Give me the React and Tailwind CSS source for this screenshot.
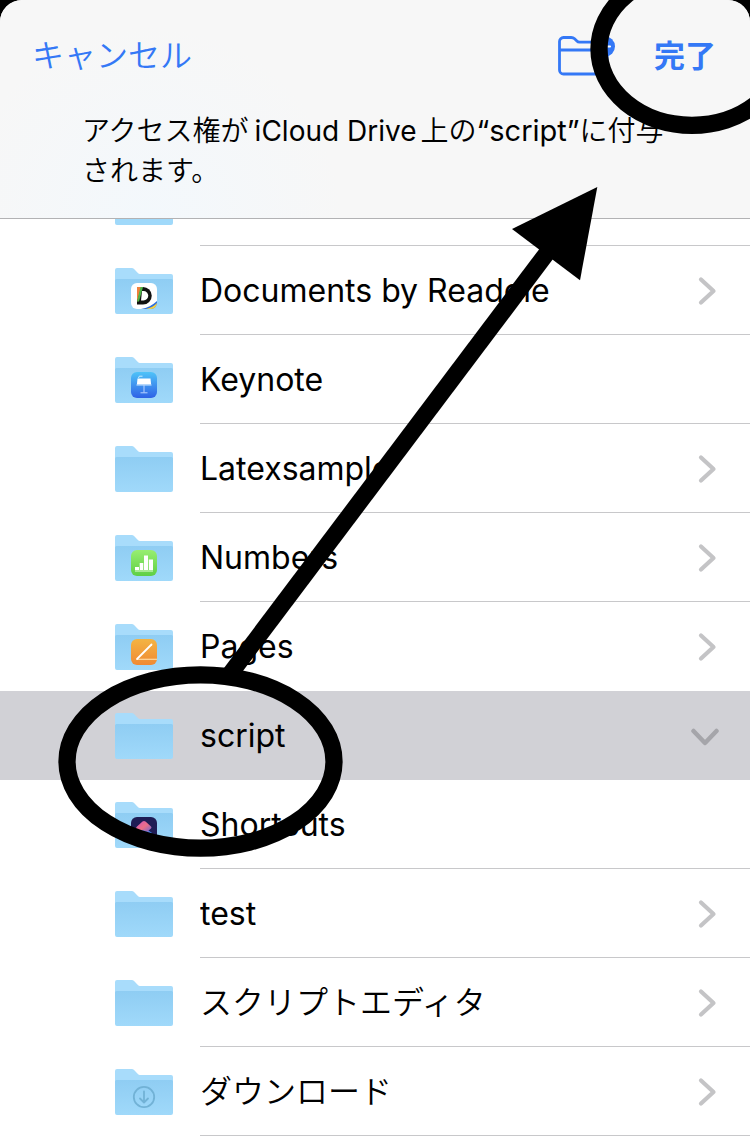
import React from "react";

function DocumentsBadge() {
  return (
    <g>
      <rect x="16" y="15" width="26" height="26" rx="6" fill="#fff" />
      <path d="M26 41c6-1 12-4 16-8v2a6 6 0 0 1-6 6z" fill="#2f6fdd" />
      <path d="M31 41c4.500-1 8.500-3 11-6a6 6 0 0 1-6 6z" fill="#f7d03c" />
      <path d="M22 19h6a8.500 8.500 0 0 1 0 17.500h-6z" fill="#111" />
      <path d="M27 23h1.500a4.700 4.700 0 0 1 0 9.500H26z" fill="#fff" />
      <path d="M22 19h4.500L22 34z" fill="#f0803c" />
      <path d="M25.500 19h2.500L24 33.500h-2z" fill="#4fb548" />
    </g>
  );
}

function KeynoteBadge() {
  return (
    <g>
      <rect x="16" y="15" width="26" height="26" rx="6" fill="url(#keynote)" />
      <path d="M23.500 21l.8-1.800h3.200" stroke="#c8efff" strokeWidth="1" fill="none" />
      <path d="M22.500 21.500h13l.6 6h-14.200z" fill="#fff" />
      <path d="M21.500 28h15" stroke="#cfe6ff" strokeWidth="1" />
      <path d="M29 28v7.500M25.500 35.800h7" stroke="#b9d2ff" strokeWidth="1" />
    </g>
  );
}

function NumbersBadge() {
  return (
    <g>
      <rect x="16" y="15" width="26" height="26" rx="6" fill="url(#numbers)" />
      <path d="M20 32h4v3h-4zM24.700 28h3.600v7h-3.600zM29 20.500h4V35h-4zM33.800 24.500H38V35h-4.200z" fill="#fff" />
      <path d="M20 36h18" stroke="#e6ffd9" strokeWidth="1" />
    </g>
  );
}

function PagesBadge() {
  return (
    <g>
      <rect x="16" y="15" width="26" height="26" rx="6" fill="url(#pages)" />
      <path d="M22 35.300h20" stroke="#ffd9a0" strokeWidth="1.200" />
      <path d="M36.500 20.500L24 33l-2 2" stroke="#fff" strokeWidth="1.800" strokeLinecap="round" />
    </g>
  );
}

function ShortcutsBadge() {
  return (
    <g>
      <rect x="16" y="15" width="26" height="26" rx="6" fill="#1f1c55" />
      <path d="M22 31l7 5.500 8-5.500-7-5z" fill="#3d8df5" />
      <path d="M21 26.500q0-1.200 1-2l5.500-5q1.500-1.200 3 0l5.500 5q1 1 0 2L33 29l3 2-7-2.500-5.500 0-1.500 0q-1-.8-1-2z" fill="url(#shortcuts)" />
    </g>
  );
}

function DownloadBadge() {
  return (
    <g fill="none" stroke="#72b2d6" strokeWidth="1.800" strokeLinecap="round" strokeLinejoin="round">
      <circle cx="29" cy="28" r="10.200" />
      <path d="M29 22.500v10.500M25 29.500l4 4 4-4" />
    </g>
  );
}

const badges = {
  documents: DocumentsBadge,
  keynote: KeynoteBadge,
  numbers: NumbersBadge,
  pages: PagesBadge,
  shortcuts: ShortcutsBadge,
  download: DownloadBadge,
};

function Folder({ badge }) {
  const Badge = badges[badge];
  return (
    <svg className="block h-[46px] w-[58px] shrink-0" viewBox="0 0 58 46" fill="none" aria-hidden="true">
      <path d="M0 2a2 2 0 0 1 2-2h14.500q1.700 0 2.800 1.200l3.600 3.900q.8.900 2.100.9h31a2 2 0 0 1 2 2v8H0z" fill="#a8dcfb" />
      <path d="M0 12.500a1.500 1.500 0 0 1 1.500-1.500h55a1.500 1.500 0 0 1 1.500 1.500V44a2 2 0 0 1-2 2H2a2 2 0 0 1-2-2z" fill="url(#folder)" />
      {Badge && <Badge />}
    </svg>
  );
}

function Gradients() {
  return (
    <svg className="absolute h-0 w-0" aria-hidden="true">
      <defs>
        <linearGradient id="folder" x1="0" y1="0" x2="0" y2="1">
          <stop stopColor="#8fcdf3" />
          <stop offset="1" stopColor="#a0d9fa" />
        </linearGradient>
        <linearGradient id="keynote" x1="0" y1="0" x2="0" y2="1">
          <stop stopColor="#4fc3f8" />
          <stop offset="1" stopColor="#2f62e6" />
        </linearGradient>
        <linearGradient id="numbers" x1="0" y1="0" x2="0" y2="1">
          <stop stopColor="#98ee71" />
          <stop offset="1" stopColor="#5fcf45" />
        </linearGradient>
        <linearGradient id="pages" x1="0" y1="0" x2="0" y2="1">
          <stop stopColor="#f3b443" />
          <stop offset="1" stopColor="#f08a34" />
        </linearGradient>
        <linearGradient id="shortcuts" x1="0" y1="0" x2="1" y2="1">
          <stop offset=".1" stopColor="#d458b4" />
          <stop offset=".5" stopColor="#ec6f86" />
          <stop offset="1" stopColor="#5b63e0" />
        </linearGradient>
      </defs>
    </svg>
  );
}

function Chevron({ open }) {
  return open ? (
    <svg className="mr-[30px] block h-5 w-[30px] shrink-0" viewBox="0 0 30 20" fill="none" aria-hidden="true">
      <path d="M3.500 5L15 17 26.500 5" stroke="#a5a5aa" strokeWidth="4.500" strokeLinecap="round" strokeLinejoin="round" />
    </svg>
  ) : (
    <svg className="mr-8 block h-[30px] w-5 shrink-0" viewBox="0 0 20 30" fill="none" aria-hidden="true">
      <path d="M3 3.500L15.500 15 3 26.500" stroke="#c4c4c6" strokeWidth="4.200" strokeLinecap="round" strokeLinejoin="round" />
    </svg>
  );
}

const items = [
  { name: "Documents by Readdle", badge: "documents", arrow: true },
  { name: "Keynote", badge: "keynote" },
  { name: "Latexsample", arrow: true },
  { name: "Numbers", badge: "numbers", arrow: true },
  { name: "Pages", badge: "pages", arrow: true },
  { name: "script", arrow: true, selected: true },
  { name: "Shortcuts", badge: "shortcuts" },
  { name: "test", arrow: true },
  { name: "スクリプトエディタ", arrow: true, japanese: true },
  { name: "ダウンロード", badge: "download", arrow: true, japanese: true },
];

function Row({ item, divider }) {
  return (
    <li className={item.selected ? "bg-[#d1d1d6]" : "bg-white"}>
      <button
        type="button"
        aria-expanded={item.arrow ? !!item.selected : undefined}
        className="flex h-[89px] w-full items-stretch pl-[115px] text-left"
      >
        <span className="flex items-center">
          <Folder badge={item.badge} />
        </span>
        <span
          className={
            "ml-[27px] flex min-w-0 grow items-center justify-between border-b pt-0.5 " +
            (divider ? "border-[#c8c8ca]" : "border-transparent")
          }
        >
          <span className={"truncate text-[32px] leading-10 " + (item.japanese ? "font-[350]" : "font-normal")}>
            {item.name}
          </span>
          {item.arrow && <Chevron open={item.selected} />}
        </span>
      </button>
    </li>
  );
}

function NewFolderIcon() {
  return (
    <svg className="block h-12 w-[60px]" viewBox="0 0 60 48" fill="none" aria-hidden="true">
      <path
        d="M49 18v20a4 4 0 0 1-4 4H5.500a4 4 0 0 1-4-4V9.500a4 4 0 0 1 4-4h7.700q2 0 3.400 1.300l2 1.900q1.300 1.400 3 1.400H42M1.500 18H46"
        stroke="#3478f6"
        strokeWidth="2.800"
        strokeLinejoin="round"
      />
      <circle cx="46.800" cy="14.500" r="10.200" fill="#3478f6" />
      <path d="M41 14.500h11M46.500 9v11" stroke="#fff" strokeWidth="2.200" strokeLinecap="round" />
    </svg>
  );
}

function Annotation() {
  return (
    <svg className="pointer-events-none absolute left-0 top-0 h-[1139px] w-[750px]" viewBox="0 0 750 1139" fill="none" aria-hidden="true">
      <ellipse cx="692" cy="49" rx="93" ry="76.300" stroke="#000" strokeWidth="17.300" />
      <ellipse cx="200.500" cy="761.500" rx="133.500" ry="86.700" stroke="#000" strokeWidth="17.300" />
      <path d="M229.300 675L547.700 252" stroke="#000" strokeWidth="17" />
      <path d="M597.300 187L512 229l68 51.300z" fill="#000" />
    </svg>
  );
}

export default function App() {
  return (
    <div className="relative min-h-screen overflow-hidden bg-white font-['Inter','Noto_Sans_CJK_JP',sans-serif] text-black">
      <Gradients />
      <div className="bg-black">
        <header className="rounded-t-[22px] border-b border-[#b2b2b4] bg-[#f7f7f7] bg-[radial-gradient(circle_at_20%_100%,#f3f8fc,#f7f7f7_30%)]">
          <div className="flex h-[111px] items-center justify-between pl-8 pr-[34px]">
            <button type="button" className="text-[32px] font-[350] leading-10 text-[#3478f6]">
              キャンセル
            </button>
            <div className="flex items-center gap-9">
              <button type="button" aria-label="新規フォルダ">
                <NewFolderIcon />
              </button>
              <button type="button" className="text-[31px] font-bold leading-10 text-[#3478f6]">
                完了
              </button>
            </div>
          </div>
          <p className="px-[82px] pb-[27px] text-[28px] font-[350] leading-10">
            アクセス権が<span className="ml-1.5 mr-1 text-[28px] font-normal leading-8">iCloud Drive</span>上の
            <span className="text-[29px] font-normal leading-8">“script”</span>に付与
            <br />
            されます。
          </p>
        </header>
      </div>
      <main>
        <div className="flex h-[27px] pl-[115px]" aria-hidden="true">
          <div className="h-1.5 w-[58px] rounded-b-[2px] bg-[#a0d9fa]" />
          <div className="ml-[27px] grow border-b border-[#c8c8ca]" />
        </div>
        <ul>
          {items.map((item, i) => (
            <Row key={item.name} item={item} divider={!item.selected && !items[i + 1]?.selected} />
          ))}
        </ul>
      </main>
      <Annotation />
    </div>
  );
}
